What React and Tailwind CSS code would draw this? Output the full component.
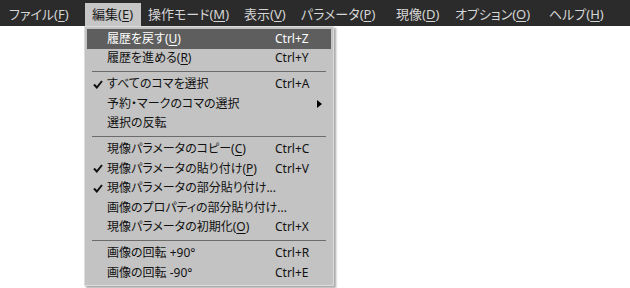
const menuBar = [
  { label: 'ファイル', key: 'F', w: 'w-[83px]' },
  { label: '編集', key: 'E', w: 'w-[56px]', active: true },
  { label: '操作モード', key: 'M', w: 'w-[96px]' },
  { label: '表示', key: 'V', w: 'w-[57px]' },
  { label: 'パラメータ', key: 'P', w: 'w-[95px]' },
  { label: '現像', key: 'D', w: 'w-[59px]' },
  { label: 'オプション', key: 'O', w: 'w-[94px]' },
  { label: 'ヘルプ', key: 'H', w: 'w-[70px]' },
];

const editMenu = [
  { label: '履歴を戻す', key: 'U', shortcut: 'Ctrl+Z', hover: true },
  { label: '履歴を進める', key: 'R', shortcut: 'Ctrl+Y' },
  { sep: true },
  { label: 'すべてのコマを選択', shortcut: 'Ctrl+A', checked: true },
  { label: '予約・マークのコマの選択', submenu: true },
  { label: '選択の反転' },
  { sep: true },
  { label: '現像パラメータのコピー', key: 'C', shortcut: 'Ctrl+C' },
  { label: '現像パラメータの貼り付け', key: 'P', shortcut: 'Ctrl+V', checked: true },
  { label: '現像パラメータの部分貼り付け...', checked: true },
  { label: '画像のプロパティの部分貼り付け...' },
  { label: '現像パラメータの初期化', key: 'O', shortcut: 'Ctrl+X' },
  { sep: true },
  { label: '画像の回転 +90°', shortcut: 'Ctrl+R' },
  { label: '画像の回転 -90°', shortcut: 'Ctrl+E' },
];

const Label = ({ label, k }) => (
  <span>
    {label}
    {k && (
      <>
        (<span className="underline underline-offset-2">{k}</span>)
      </>
    )}
  </span>
);

const Check = () => (
  <svg width="10" height="9" viewBox="0 0 10 9">
    <path d="M1 4.5 L3.8 7.5 L9 1" fill="none" stroke="currentColor" strokeWidth="2" />
  </svg>
);

export default function App() {
  return (
    <div
      className="relative w-[630px] h-[288px] overflow-hidden bg-white text-[12px] [font-feature-settings:'palt']"
      style={{ fontFamily: '"Noto Sans", "Noto Sans CJK JP", sans-serif' }}
    >
      <div className="flex h-[26px] bg-[#2b2b2b] pl-[2px] text-[13px] text-[#d6d6d6]">
        {menuBar.map((m) => (
          <div
            key={m.key}
            className={`${m.w} mt-[3px] flex h-[23px] shrink-0 items-center pl-[7px] ${
              m.active ? 'bg-[#c6c6c6] text-[#1a1a1a]' : ''
            }`}
          >
            <Label label={m.label} k={m.key} />
          </div>
        ))}
      </div>

      <div className="absolute left-[84px] top-[26px] w-[250px] border border-[#dcdcdc] bg-[#c3c3c3] p-[2px] text-[#111] shadow-[2px_2px_2px_rgba(0,0,0,0.35)]">
        {editMenu.map((item, i) =>
          item.sep ? (
            <div key={i} className="flex h-[6.5px] items-center px-[5px]">
              <div className="h-px w-full bg-[#6b6b6b]" />
            </div>
          ) : (
            <div
              key={i}
              className={`flex h-[19.5px] items-center ${
                item.hover ? 'bg-[#5e5e5e] text-white' : ''
              }`}
            >
              <div className="flex w-[20px] shrink-0 items-center justify-center pl-[1px]">
                {item.checked && <Check />}
              </div>
              <div className="min-w-0 flex-1 whitespace-nowrap">
                <Label label={item.label} k={item.key} />
              </div>
              <div className="relative w-[56px] shrink-0 whitespace-nowrap">
                {item.shortcut}
                {item.submenu && (
                  <svg
                    className="absolute left-[42px] top-1/2 -translate-y-1/2"
                    width="5"
                    height="8"
                    viewBox="0 0 5 8"
                  >
                    <path d="M0 0 L5 4 L0 8 Z" fill="#000" />
                  </svg>
                )}
              </div>
            </div>
          )
        )}
      </div>
    </div>
  );
}
